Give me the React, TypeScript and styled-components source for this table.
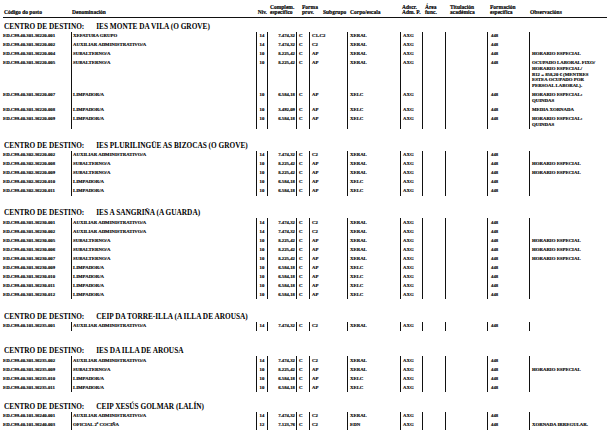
import React from 'react';
import styled, { createGlobalStyle } from 'styled-components';

const GlobalStyle = createGlobalStyle`
  html, body { margin: 0; padding: 0; background: #fff; }
  body { font-family: "Liberation Serif", "Times New Roman", serif; color: #000; }
`;

// column widths, taken from where the ruled lines fall on the page
const COLS = '71px 185px 11px 29px 13px 38px 53px 22px 23px 42px 42px 86px';

type Row = {
  code: string;
  denom: string;
  niv: string;
  comp: string;
  sub: string;
  corpo: string;
  obs: string[];
};

type Group = { name: string; gap: number; rows: Row[] };

const r = (code: string, denom: string, niv: string, comp: string, sub: string, corpo: string, obs: string[] = []): Row => ({
  code, denom, niv, comp, sub, corpo, obs,
});

const AUX = 'AUXILIAR ADMINISTRATIVO/A';
const SUB = 'SUBALTERNO/A';
const LIM = 'LIMPADOR/A';
const HE = ['HORARIO ESPECIAL'];

const groups: Group[] = [
  {
    name: 'IES MONTE DA VILA (O GROVE)',
    gap: 3,
    rows: [
      r('ED.C99.40.301.36220.001', 'XEFATURA GRUPO', '14', '7.474,32', 'C1-C2', 'XERAL'),
      r('ED.C99.40.301.36220.002', AUX, '14', '7.474,32', 'C2', 'XERAL'),
      r('ED.C99.40.301.36220.004', SUB, '10', '8.225,42', 'AP', 'XERAL', HE),
      r('ED.C99.40.301.36220.005', SUB, '10', '8.225,42', 'AP', 'XERAL', [
        'OCUPADO LABORAL FIXO/',
        'HORARIO ESPECIAL/',
        'B12 = 858,20 € (MENTRES',
        'ESTEA OCUPADO POR',
        'PERSOAL LABORAL).',
      ]),
      r('ED.C99.40.301.36220.007', LIM, '10', '6.584,18', 'AP', 'XELC', ['HORARIO ESPECIAL:', 'QUINDAS']),
      r('ED.C99.40.301.36220.008', LIM, '10', '3.492,09', 'AP', 'XELC', ['MEDIA XORNADA']),
      r('ED.C99.40.301.36220.009', LIM, '10', '6.584,18', 'AP', 'XELC', ['HORARIO ESPECIAL:', 'QUINDAS']),
    ],
  },
  {
    name: 'IES PLURILINGÜE AS BIZOCAS (O GROVE)',
    gap: 11,
    rows: [
      r('ED.C99.40.302.36220.002', AUX, '14', '7.474,32', 'C2', 'XERAL'),
      r('ED.C99.40.302.36220.008', SUB, '10', '8.225,42', 'AP', 'XERAL', HE),
      r('ED.C99.40.302.36220.009', SUB, '10', '8.225,42', 'AP', 'XERAL', HE),
      r('ED.C99.40.302.36220.010', LIM, '10', '6.584,18', 'AP', 'XELC'),
      r('ED.C99.40.302.36220.011', LIM, '10', '6.584,18', 'AP', 'XELC'),
    ],
  },
  {
    name: 'IES A SANGRIÑA (A GUARDA)',
    gap: 12,
    rows: [
      r('ED.C99.40.301.36230.001', AUX, '14', '7.474,32', 'C2', 'XERAL'),
      r('ED.C99.40.301.36230.002', AUX, '14', '7.474,32', 'C2', 'XERAL'),
      r('ED.C99.40.301.36230.005', SUB, '10', '8.225,42', 'AP', 'XERAL', HE),
      r('ED.C99.40.301.36230.006', SUB, '10', '8.225,42', 'AP', 'XERAL', HE),
      r('ED.C99.40.301.36230.007', SUB, '10', '8.225,42', 'AP', 'XERAL', HE),
      r('ED.C99.40.301.36230.009', LIM, '10', '6.584,18', 'AP', 'XELC'),
      r('ED.C99.40.301.36230.010', LIM, '10', '6.584,18', 'AP', 'XELC'),
      r('ED.C99.40.301.36230.011', LIM, '10', '6.584,18', 'AP', 'XELC'),
      r('ED.C99.40.301.36230.012', LIM, '10', '6.584,18', 'AP', 'XELC'),
    ],
  },
  {
    name: 'CEIP DA TORRE-ILLA (A ILLA DE AROUSA)',
    gap: 12,
    rows: [r('ED.C99.40.101.36235.001', AUX, '14', '7.474,32', 'C2', 'XERAL')],
  },
  {
    name: 'IES DA ILLA DE AROUSA',
    gap: 15,
    rows: [
      r('ED.C99.40.301.36235.002', AUX, '14', '7.474,32', 'C2', 'XERAL'),
      r('ED.C99.40.301.36235.009', SUB, '10', '8.225,42', 'AP', 'XERAL', HE),
      r('ED.C99.40.301.36235.010', LIM, '10', '6.584,18', 'AP', 'XELC'),
      r('ED.C99.40.301.36235.011', LIM, '10', '6.584,18', 'AP', 'XELC'),
    ],
  },
  {
    name: 'CEIP XESÚS GOLMAR (LALÍN)',
    gap: 9,
    rows: [
      r('ED.C99.40.101.36240.001', AUX, '14', '7.474,32', 'C2', 'XERAL'),
      r('ED.C99.40.101.36240.003', 'OFICIAL 2ª COCIÑA', '12', '7.123,76', 'C2', 'EDN', ['XORNADA IRREGULAR.']),
    ],
  },
];

const Page = styled.div`
  width: 615px;
  height: 439px;
  overflow: hidden;
  padding-top: 4px;
  box-sizing: border-box;
  font-weight: 700;
`;

const HeadGrid = styled.div`
  display: grid;
  grid-template-columns: ${COLS};
  height: 12px;
`;

const HeadCell = styled.div<{ $pl?: number; $right?: boolean }>`
  display: flex;
  flex-direction: column;
  justify-content: flex-end;
  align-items: ${(p) => (p.$right ? 'flex-end' : 'flex-start')};
  padding-left: ${(p) => p.$pl ?? 0}px;
  font-size: 5.5px;
  line-height: 5.6px;
  white-space: nowrap;
  -webkit-text-stroke: 0.15px #000;
`;

const Rule = styled.div`
  height: 1px;
  margin: 1px 8px 0 3px;
  background: #111;
`;

const Section = styled.section<{ $gap: number }>`
  margin-top: ${(p) => p.$gap}px;
`;

const SectionTitle = styled.div`
  display: flex;
  align-items: center;
  height: 10.5px;
  padding-left: 4px;
  font-size: 7.3px;
  white-space: nowrap;
`;

const TitleLabel = styled.span`
  margin-right: 12px;
`;

const RowGrid = styled.div`
  display: grid;
  grid-template-columns: ${COLS};
  min-height: 9px;
`;

const Cell = styled.div<{ $line?: boolean; $align?: 'left' | 'center' | 'right'; $pl?: number; $pr?: number }>`
  border-left: ${(p) => (p.$line ? '1px solid #111' : 'none')};
  text-align: ${(p) => p.$align ?? 'left'};
  padding: 1.6px ${(p) => p.$pr ?? 0}px 1.6px ${(p) => p.$pl ?? 0}px;
  font-size: 4.8px;
  line-height: 5.8px;
  white-space: nowrap;
  -webkit-text-stroke: 0.15px #000;
`;

const ObsLine = styled.div``;

function DataRow({ row }: { row: Row }) {
  return (
    <RowGrid>
      <Cell $pl={3}>{row.code}</Cell>
      <Cell $line $pl={1}>{row.denom}</Cell>
      <Cell $line $align="center">{row.niv}</Cell>
      <Cell $line $align="right" $pr={1}>{row.comp}</Cell>
      <Cell $line $pl={2}>C</Cell>
      <Cell $line $pl={2}>{row.sub}</Cell>
      <Cell $line $pl={2}>{row.corpo}</Cell>
      <Cell $line $pl={2}>AXG</Cell>
      <Cell $line />
      <Cell $line />
      <Cell $line $pl={3}>448</Cell>
      <Cell $line $pl={2}>
        {row.obs.map((l, i) => (
          <ObsLine key={i}>{l}</ObsLine>
        ))}
      </Cell>
    </RowGrid>
  );
}

export default function App() {
  return (
    <Page>
      <GlobalStyle />
      <HeadGrid>
        <HeadCell $pl={4}>Código do posto</HeadCell>
        <HeadCell $pl={1}>Denominación</HeadCell>
        <HeadCell $right>Niv.</HeadCell>
        <HeadCell $pl={3}>
          <span>Complem.</span>
          <span>específico</span>
        </HeadCell>
        <HeadCell $pl={6}>
          <span>Forma</span>
          <span>prov.</span>
        </HeadCell>
        <HeadCell $pl={14}>Subgrupo</HeadCell>
        <HeadCell $pl={3}>Corpo/escala</HeadCell>
        <HeadCell $pl={2}>
          <span>Adscr.</span>
          <span>Adm. P.</span>
        </HeadCell>
        <HeadCell $pl={3}>
          <span>Área</span>
          <span>func.</span>
        </HeadCell>
        <HeadCell $pl={5}>
          <span>Titulación</span>
          <span>académica</span>
        </HeadCell>
        <HeadCell $pl={3}>
          <span>Formación</span>
          <span>específica</span>
        </HeadCell>
        <HeadCell $pl={1}>Observacións</HeadCell>
      </HeadGrid>
      <Rule />
      {groups.map((g) => (
        <Section key={g.name} $gap={g.gap}>
          <SectionTitle>
            <TitleLabel>CENTRO DE DESTINO:</TitleLabel>
            <span>{g.name}</span>
          </SectionTitle>
          {g.rows.map((row) => (
            <DataRow key={row.code} row={row} />
          ))}
        </Section>
      ))}
    </Page>
  );
}
